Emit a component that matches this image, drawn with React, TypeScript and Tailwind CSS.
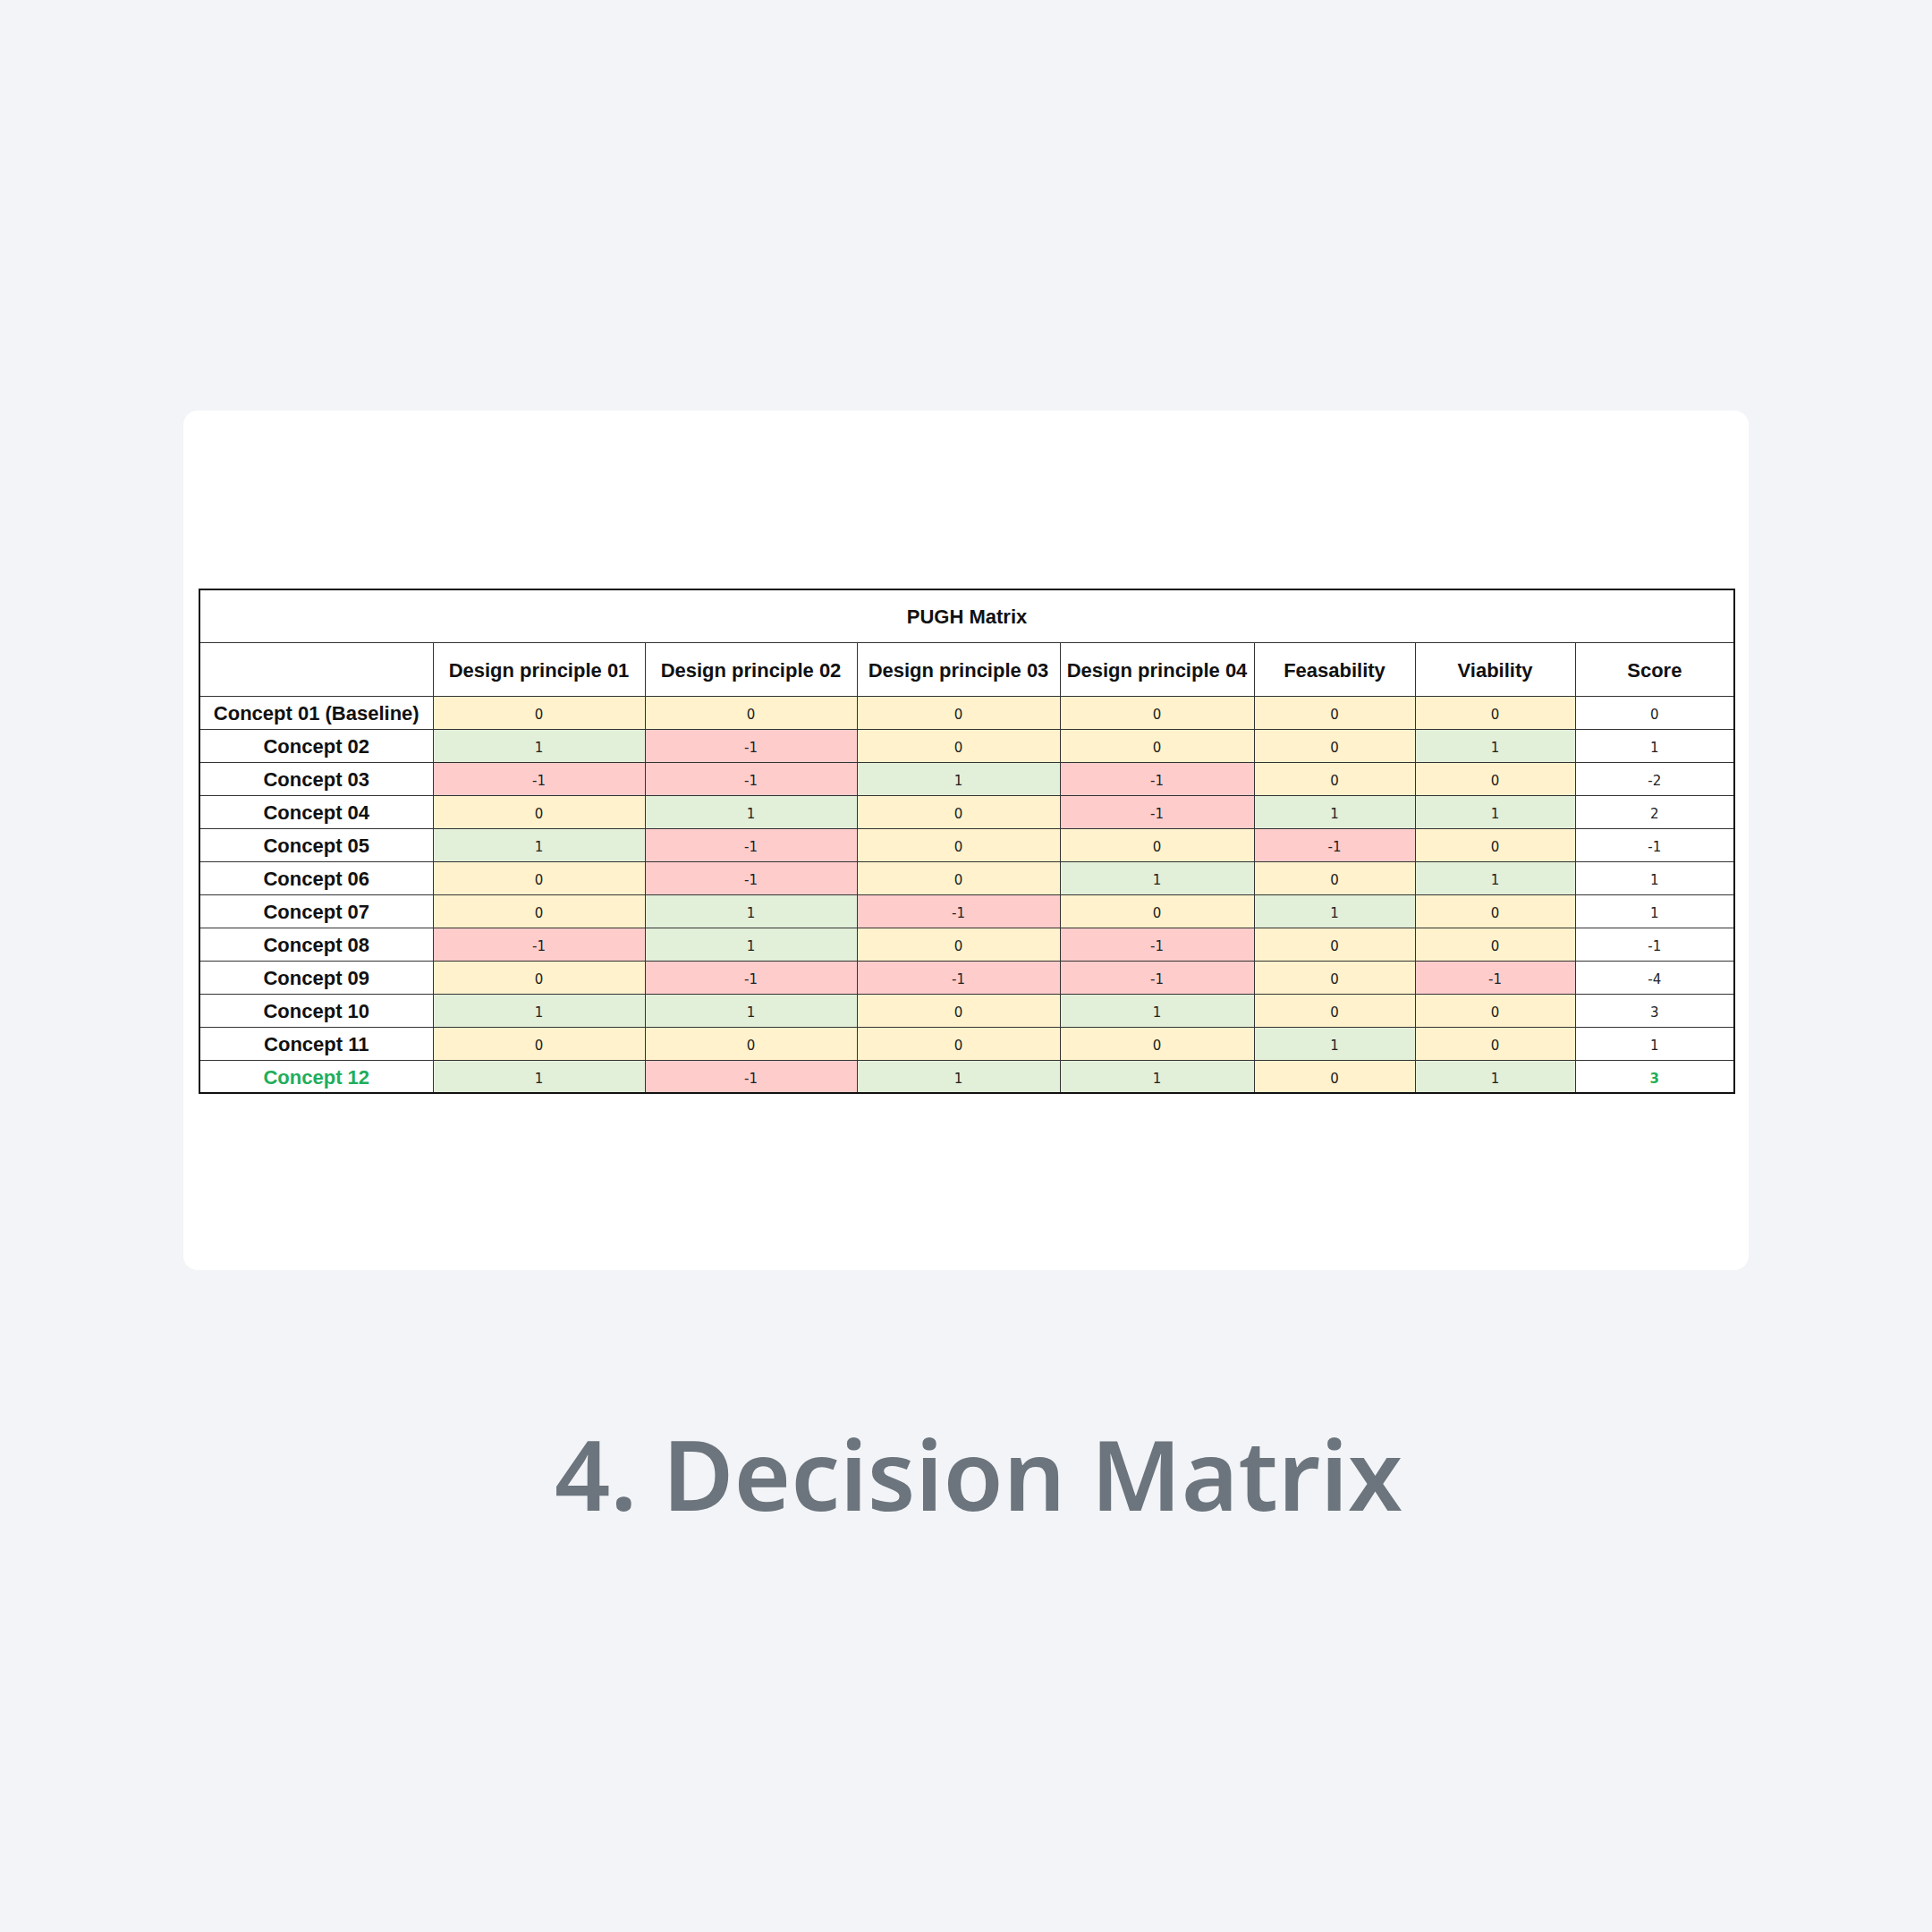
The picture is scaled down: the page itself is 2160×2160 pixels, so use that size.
const COLUMNS = [
  "Design principle 01",
  "Design principle 02",
  "Design principle 03",
  "Design principle 04",
  "Feasability",
  "Viability",
];

const ROWS: { label: string; values: number[]; score: number; highlight?: boolean }[] = [
  { label: "Concept 01 (Baseline)", values: [0, 0, 0, 0, 0, 0], score: 0 },
  { label: "Concept 02", values: [1, -1, 0, 0, 0, 1], score: 1 },
  { label: "Concept 03", values: [-1, -1, 1, -1, 0, 0], score: -2 },
  { label: "Concept 04", values: [0, 1, 0, -1, 1, 1], score: 2 },
  { label: "Concept 05", values: [1, -1, 0, 0, -1, 0], score: -1 },
  { label: "Concept 06", values: [0, -1, 0, 1, 0, 1], score: 1 },
  { label: "Concept 07", values: [0, 1, -1, 0, 1, 0], score: 1 },
  { label: "Concept 08", values: [-1, 1, 0, -1, 0, 0], score: -1 },
  { label: "Concept 09", values: [0, -1, -1, -1, 0, -1], score: -4 },
  { label: "Concept 10", values: [1, 1, 0, 1, 0, 0], score: 3 },
  { label: "Concept 11", values: [0, 0, 0, 0, 1, 0], score: 1 },
  { label: "Concept 12", values: [1, -1, 1, 1, 0, 1], score: 3, highlight: true },
];

function cellTone(value: number) {
  if (value > 0) return "bg-[#e2efd9]";
  if (value < 0) return "bg-[#ffcccc]";
  return "bg-[#fff2cc]";
}

export default function App() {
  return (
    <div className="flex h-[2160px] w-full flex-col items-center justify-center bg-[#f2f4f7]">
      <div className="flex h-[961px] w-[1750px] items-center rounded-[16px] bg-white px-[17px] pt-[2px]">
        <table className="w-[1716px] table-fixed border-collapse border-2 border-[#111] font-['Liberation_Sans',Arial,sans-serif] text-[#111]">
          <colgroup>
            <col className="w-[261px]" />
            <col className="w-[237px]" />
            <col className="w-[237px]" />
            <col className="w-[227px]" />
            <col className="w-[217px]" />
            <col className="w-[180px]" />
            <col className="w-[179px]" />
            <col className="w-[178px]" />
          </colgroup>
          <thead>
            <tr className="h-[59px]">
              <th colSpan={8} className="border border-[#333] pt-[2px] text-center text-[22px] font-bold">
                PUGH Matrix
              </th>
            </tr>
            <tr className="h-[60px]">
              <th className="border border-[#333]" />
              {COLUMNS.map((column) => (
                <th
                  key={column}
                  className="whitespace-nowrap border border-[#333] px-0 pt-[2px] text-center text-[22px] font-bold"
                >
                  {column}
                </th>
              ))}
              <th className="border border-[#333] pt-[2px] text-center text-[22px] font-bold">Score</th>
            </tr>
          </thead>
          <tbody>
            {ROWS.map((row) => (
              <tr key={row.label} className="h-[37px]">
                <td
                  className={
                    row.highlight
                      ? "whitespace-nowrap border border-[#333] pt-[2px] text-center text-[22px] font-bold text-[#1fae5b]"
                      : "whitespace-nowrap border border-[#333] pt-[2px] text-center text-[22px] font-bold"
                  }
                >
                  {row.label}
                </td>
                {row.values.map((value, index) => (
                  <td
                    key={index}
                    className={`border border-[#333] pt-[5px] text-center font-['DejaVu_Sans',sans-serif] text-[15px] text-[#222] ${cellTone(value)}`}
                  >
                    {value}
                  </td>
                ))}
                <td
                  className={
                    row.highlight
                      ? "border border-[#333] bg-white pt-[5px] text-center font-['DejaVu_Sans',sans-serif] text-[15px] font-bold text-[#1fae5b]"
                      : "border border-[#333] bg-white pt-[5px] text-center font-['DejaVu_Sans',sans-serif] text-[15px] text-[#222]"
                  }
                >
                  {row.score}
                </td>
              </tr>
            ))}
          </tbody>
        </table>
      </div>
      <h1 className="mt-[172px] pl-[28px] font-['Noto_Sans',sans-serif] text-[109px] font-semibold leading-none text-[#6c747d]">
        4. Decision Matrix
      </h1>
    </div>
  );
}
